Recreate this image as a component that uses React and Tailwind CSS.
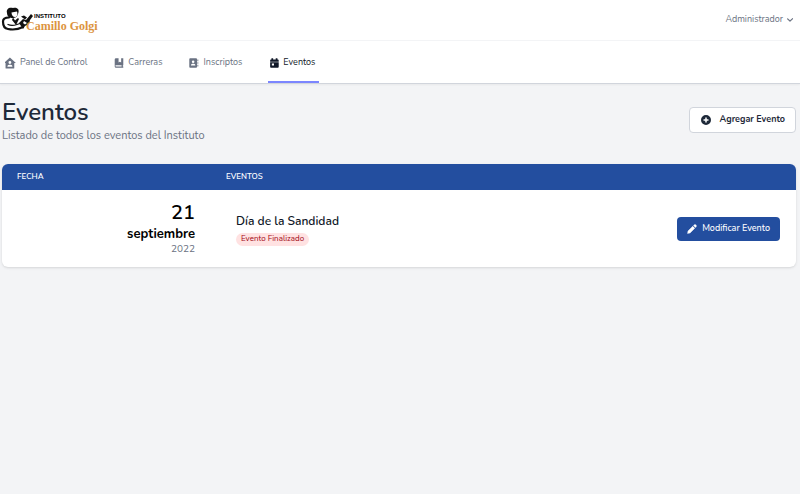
import { useState } from 'react';

const navItems = [
  { label: 'Panel de Control', icon: HomeIcon },
  { label: 'Carreras', icon: BookIcon },
  { label: 'Inscriptos', icon: ContactIcon },
  { label: 'Eventos', icon: CalendarIcon },
];

const events = [
  { day: 21, month: 'septiembre', year: 2022, name: 'Día de la Sandidad', status: 'Evento Finalizado' },
];

function Icon({ viewBox = '0 0 24 24', children }) {
  return (
    <svg viewBox={viewBox} fill="currentColor" fillRule="evenodd" className="size-3 shrink-0" aria-hidden="true">
      {children}
    </svg>
  );
}

function HomeIcon() {
  return (
    <Icon viewBox="3 1 22 22">
      <path d="M12 2 1 12h3v9a1 1 0 0 0 1 1h14a1 1 0 0 0 1-1v-9h3L12 2Zm0 6.500a2.600 2.600 0 1 1 0 5.200 2.600 2.600 0 0 1 0-5.200Zm-4.500 10.500v-1.200c0-1.700 2.700-2.600 4.500-2.600s4.500.9 4.500 2.600V19h-9Z" />
    </Icon>
  );
}

function BookIcon() {
  return (
    <Icon viewBox="-2 -2 28 28">
      <path d="M5 1a3 3 0 0 0-3 3v16a3 3 0 0 0 3 3h17v-3h-1v-3h1V1h-5v10l-3-2-3 2V1H5Zm0 16h13v3H5a1.500 1.500 0 0 1 0-3Z" />
    </Icon>
  );
}

function ContactIcon() {
  return (
    <Icon viewBox="-1 -2 28 28">
      <path d="M4 1h14a2 2 0 0 1 2 2v18a2 2 0 0 1-2 2H4a2 2 0 0 1-2-2V3a2 2 0 0 1 2-2Zm7 5a3 3 0 1 0 0 6 3 3 0 0 0 0-6ZM6 18h10v-1.500c0-2-2.500-3-5-3s-5 1-5 3V18ZM21 4h2v4h-2V4Zm0 6h2v4h-2v-4Zm0 6h2v4h-2v-4Z" />
    </Icon>
  );
}

function CalendarIcon() {
  return (
    <Icon viewBox="-3 -2 28 28">
      <path d="M5 1h4v3h6V1h4v3h1a2 2 0 0 1 2 2v3H2V6a2 2 0 0 1 2-2h1V1ZM2 10h20v11a2 2 0 0 1-2 2H4a2 2 0 0 1-2-2V10Zm4 3v5h5v-5H6Z" />
    </Icon>
  );
}

function Logo() {
  return (
    <a href="#" className="flex items-start" aria-label="Instituto Camillo Golgi">
      <svg viewBox="0 0 34 30" className="-mr-2 h-[30px] w-[34px] shrink-0" aria-hidden="true">
        <path d="M7 8C6 4 9 2 13 3c4-1 7 1 5 6-1 3-3 4-5 4-4 0-6-2-6-5Z" fill="#111" />
        <path d="M11.500 7.500 17 6.500c1 3 0 5.500-2 5.500s-3.500-2-3.500-4.500Z" fill="#fff" />
        <path d="M9 12.500c-4 0-6 1.500-6 4 0 4 1 7 5 7.500 5 1 11 0 15-2" fill="none" stroke="#111" strokeWidth="2.200" strokeLinecap="round" />
        <path d="m13 12.500 2 3 3-2.500 1 1-3 6-4-5 1-2.500Z" fill="#111" />
        <path d="M8 19.500c3 1.500 6 1 9 0l3-1" fill="none" stroke="#111" strokeWidth="1.300" strokeLinecap="round" />
        <path d="m19 18 4-4 3 1 5-6 2 2-3 4-1 4-4 2-2 3-4-6Z" fill="#111" />
        <path d="m24 16 3 2-2 1.500-2-1.500 1-2Z" fill="#fff" />
        <path d="m21 11.500 3-1 3 2-2 2-4-3Z" fill="#111" />
      </svg>
      <span className="flex flex-col pt-[7px]" aria-hidden="true">
        <span className="pl-2 font-['Liberation_Sans',sans-serif] text-[6px] leading-[8px] font-bold text-black">
          INSTITUTO
        </span>
        <span className="font-['Liberation_Serif',serif] text-[12px] leading-[13px] font-bold text-[#dc943f]">Camillo Golgi</span>
      </span>
    </a>
  );
}

export default function App() {
  const [active, setActive] = useState('Eventos');

  return (
    <div className="min-h-screen bg-gray-100 font-[Nunito,Lato,sans-serif]">
      <header className="border-b border-gray-300 bg-white shadow-xs">
        <div className="flex h-[41px] items-center justify-between border-b border-gray-100 pr-1">
          <Logo />
          <button className="flex items-center gap-px text-[9px] text-gray-500">
            Administrador
            <svg viewBox="0 0 20 20" fill="currentColor" className="size-3" aria-hidden="true">
              <path d="M5.300 7.300a1 1 0 0 1 1.400 0L10 10.600l3.300-3.300a1 1 0 1 1 1.400 1.400l-4 4a1 1 0 0 1-1.400 0l-4-4a1 1 0 0 1 0-1.400Z" />
            </svg>
          </button>
        </div>
        <nav className="flex h-[42px] gap-[22px] pl-[5px]">
          {navItems.map(({ label, icon: NavIcon }) => (
            <a
              key={label}
              href="#"
              onClick={() => setActive(label)}
              aria-current={active === label ? 'page' : undefined}
              className={`flex items-center gap-[3px] border-b-2 pt-[3px] pr-1 text-[9px] ${
                active === label ? 'border-indigo-400 text-gray-900' : 'border-transparent text-gray-500'
              }`}
            >
              <NavIcon />
              {label}
            </a>
          ))}
        </nav>
      </header>

      <main className="pt-3 pr-1 pl-[2px]">
        <div className="flex items-center justify-between">
          <div>
            <h1 className="text-2xl font-semibold text-gray-800">Eventos</h1>
            <p className="text-[11px] leading-4 text-gray-500">Listado de todos los eventos del Instituto</p>
          </div>
          <button className="flex h-[26px] items-center gap-2 rounded border border-gray-300 bg-white px-[10px] text-[9px] font-bold text-gray-800">
            <Icon>
              <path d="M12 2a10 10 0 1 0 0 20 10 10 0 0 0 0-20Zm-1.500 5h3v3.500H17v3h-3.500V17h-3v-3.500H7v-3h3.500V7Z" />
            </Icon>
            Agregar Evento
          </button>
        </div>

        <div className="mt-5 overflow-hidden rounded-md bg-white shadow">
          <table className="w-full">
            <thead className="bg-[#234e9f] text-left text-[8px] text-white">
              <tr className="h-[26px]">
                <th className="w-[209px] pl-[15px] font-semibold">FECHA</th>
                <th className="pl-[15px] font-semibold">EVENTOS</th>
                <th aria-label="Acciones" />
              </tr>
            </thead>
            <tbody>
              {events.map((event) => (
                <tr key={event.name} className="h-[77px]">
                  <td className="pr-4 text-right text-black">
                    <div className="text-xl leading-6 font-semibold">{event.day}</div>
                    <div className="text-[13px] leading-[18px] font-bold">{event.month}</div>
                    <div className="text-[10px] leading-[13px] text-gray-500">{event.year}</div>
                  </td>
                  <td className="pl-[25px]">
                    <div className="text-xs leading-[18px] font-semibold text-gray-900">{event.name}</div>
                    <span className="mt-[3px] flex h-[13px] w-fit items-center rounded-full bg-red-100 px-[5px] text-[8px] text-red-800">
                      {event.status}
                    </span>
                  </td>
                  <td className="pr-4">
                    <button className="ml-auto flex h-6 items-center gap-[3px] rounded bg-[#234e9f] px-[10px] text-[9px] font-medium text-white">
                      <Icon viewBox="2 0 24 24">
                        <path d="M16 3.500a3 3 0 0 1 4 0l.5.5a3 3 0 0 1 0 4L19 9.500 14.500 5 16 3.500Zm-2.500 2.500L18 10.500 8 20.500 2.500 21.500l1-5.500 10-10Z" />
                      </Icon>
                      Modificar Evento
                    </button>
                  </td>
                </tr>
              ))}
            </tbody>
          </table>
        </div>
      </main>
    </div>
  );
}
